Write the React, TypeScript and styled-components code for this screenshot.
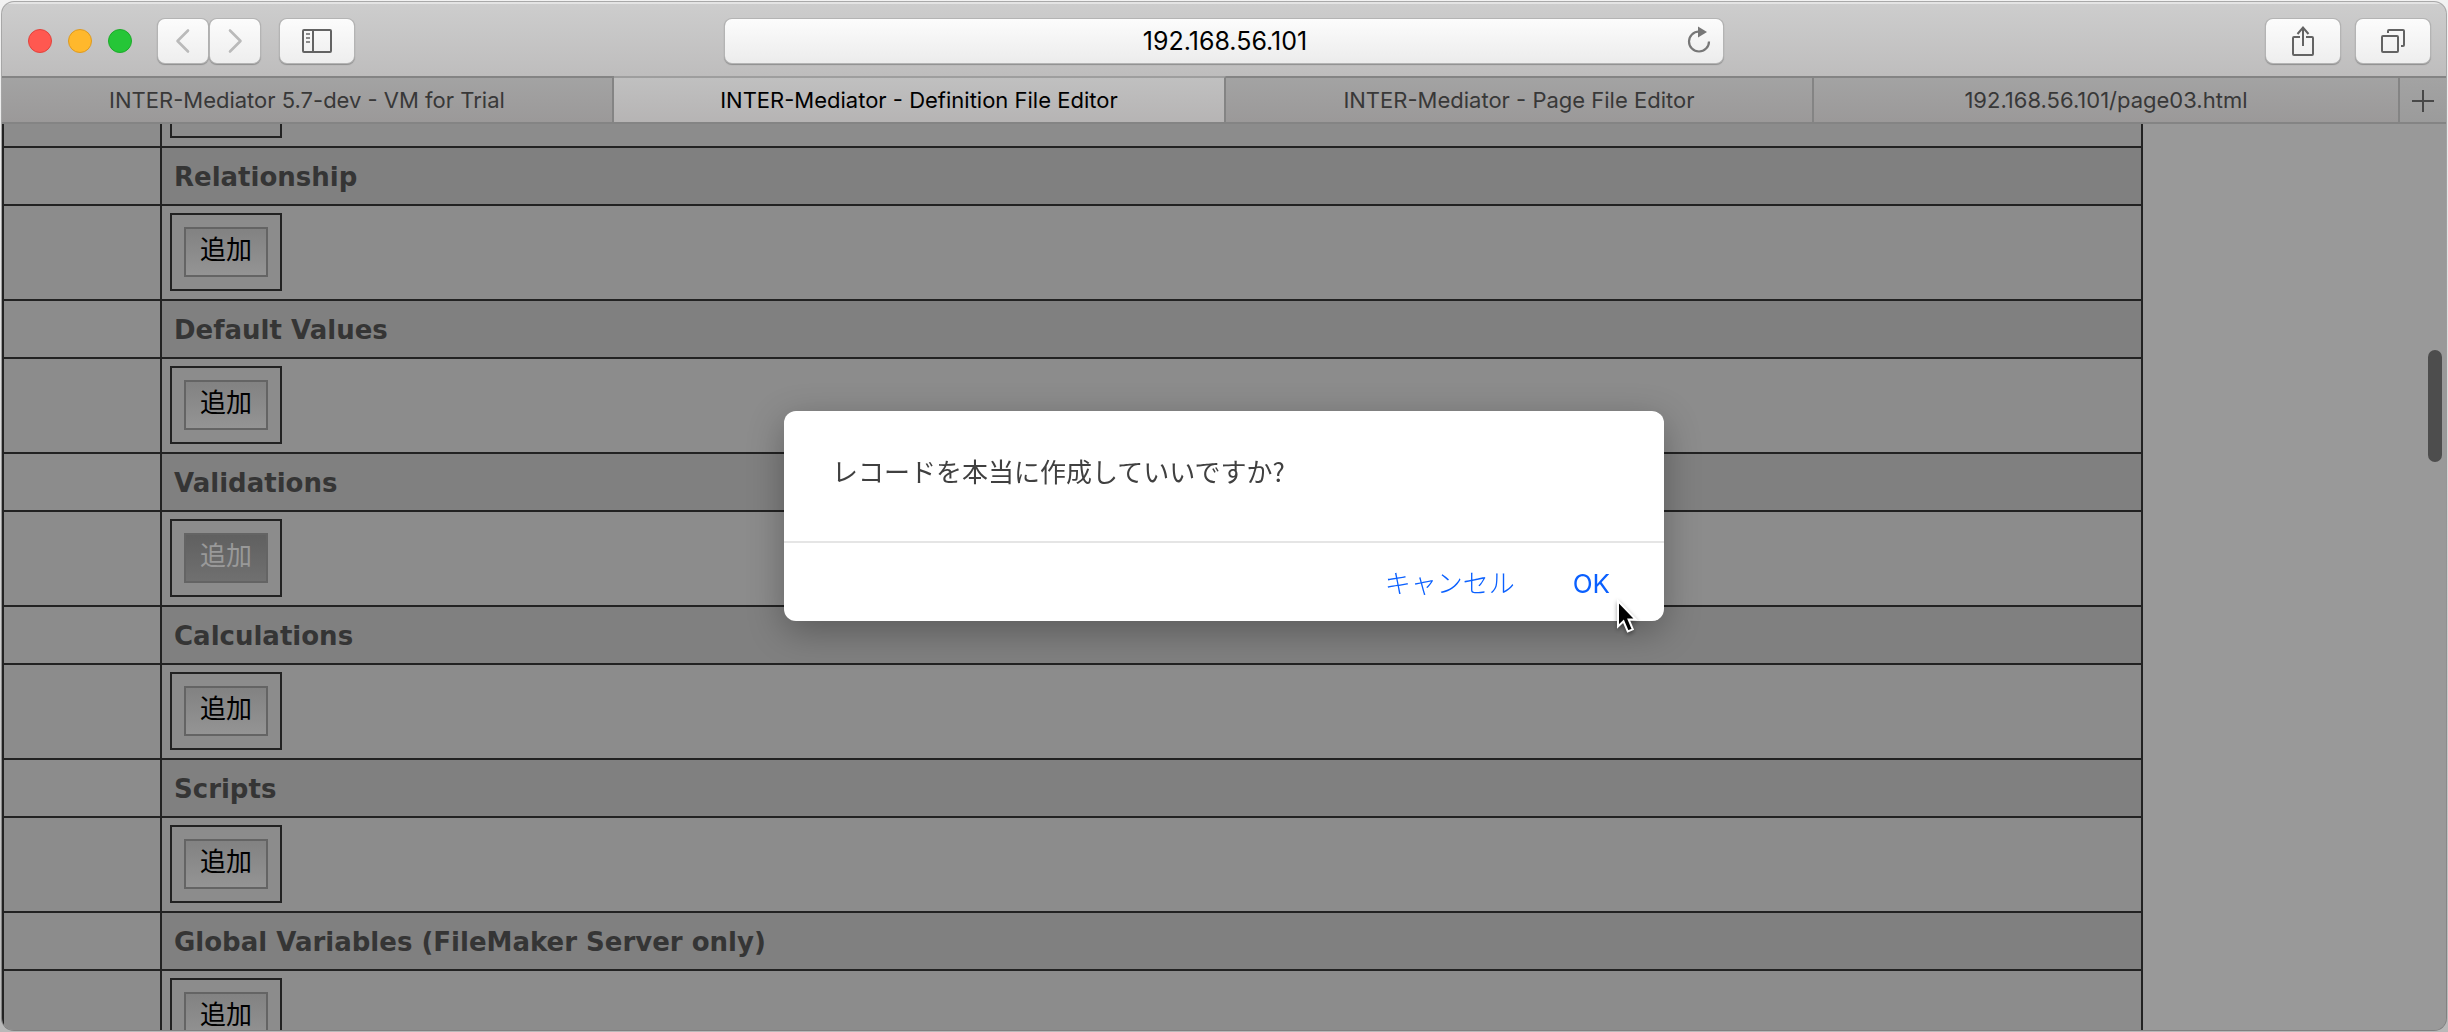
import React from "react";
import styled, { createGlobalStyle } from "styled-components";

const uiFont = `Inter, "Noto Sans CJK JP", sans-serif`;
const pageFont = `Verdana, "DejaVu Sans", "Noto Sans CJK JP", sans-serif`;

const GlobalStyle = createGlobalStyle`
  *, *::before, *::after { box-sizing: border-box; }
  body {
    margin: 0;
    background: linear-gradient(#f2f2f2, #b8b8b8);
    font-family: ${uiFont};
  }
  button, input { font: inherit; }
`;

const Desktop = styled.div`
  height: 100vh;
  padding: 2px;
  overflow: hidden;
`;

const BrowserWindow = styled.div`
  display: flex;
  flex-direction: column;
  height: 100%;
  overflow: hidden;
  border-radius: 12px;
  background: #999999;
  box-shadow: 0 0 0 1px rgba(0, 0, 0, 0.3);
`;

const Toolbar = styled.header`
  display: grid;
  grid-template-columns: 1fr minmax(0, 998px) 1fr;
  align-items: center;
  flex: none;
  height: 74px;
  padding: 2px 16px 0;
  border-top: 2px solid #e4e4e4;
  background: linear-gradient(#cdcdcd, #bebdbd);
`;

const ToolGroup = styled.div<{ $end?: boolean }>`
  display: flex;
  align-items: center;
  justify-content: ${(p) => (p.$end ? "flex-end" : "flex-start")};
  gap: ${(p) => (p.$end ? "16px" : "20px")};
  padding-left: 10px;
`;

const TrafficLights = styled.div`
  display: flex;
  gap: 16px;
  margin-right: 6px;
`;

const TrafficLight = styled.button<{ $fill: string; $edge: string }>`
  width: 24px;
  height: 24px;
  padding: 0;
  border: 1px solid ${(p) => p.$edge};
  border-radius: 50%;
  background: ${(p) => p.$fill};
`;

const NavPair = styled.div`
  display: flex;
  gap: 2px;
`;

const ToolButton = styled.button<{ $narrow?: boolean }>`
  display: flex;
  align-items: center;
  justify-content: center;
  width: ${(p) => (p.$narrow ? "50px" : "74px")};
  height: 44px;
  padding: 0;
  border: 0;
  border-radius: 7px;
  background: linear-gradient(#fcfcfc, #eeeeee);
  box-shadow: 0 0 0 1px #b4b4b4, 0 1px 1px 1px #8e8e8e;
  color: ${(p) => (p.$narrow ? "#bababa" : "#636363")};
`;

const AddressBar = styled.div`
  display: flex;
  align-items: center;
  height: 44px;
  padding: 0 12px 0 38px;
  border-radius: 7px;
  background: linear-gradient(#fcfcfc, #ececec);
  box-shadow: 0 0 0 1px #b4b4b4, 0 1px 1px 1px #8e8e8e;
`;

const AddressInput = styled.input`
  flex: 1;
  min-width: 0;
  height: 40px;
  padding: 0;
  border: 0;
  outline: 0;
  background: transparent;
  color: #000;
  font-size: 25px;
  text-align: center;
`;

const ReloadButton = styled.button`
  display: flex;
  width: 24px;
  height: 30px;
  padding: 0;
  border: 0;
  background: transparent;
  color: #777;
`;

const TabBar = styled.nav`
  display: flex;
  flex: none;
  height: 48px;
  border-bottom: 2px solid #848484;
`;

const Tab = styled.button<{ $active?: boolean; $grow: number }>`
  flex: ${(p) => p.$grow} 1 0;
  min-width: 0;
  padding: 0;
  border: 0;
  border-top: 2px solid ${(p) => (p.$active ? "#9e9e9e" : "#848484")};
  border-right: 2px solid #848484;
  background: ${(p) =>
    p.$active
      ? "linear-gradient(#c0c0c0, #b6b4b4)"
      : "linear-gradient(#a3a3a3, #9b9999)"};
  color: ${(p) => (p.$active ? "#000" : "#383838")};
  font-size: 22px;
  line-height: 28px;
  white-space: nowrap;
`;

const NewTabButton = styled.button`
  display: flex;
  flex: none;
  align-items: center;
  justify-content: center;
  width: 46px;
  padding: 2px 0 0;
  border: 0;
  border-top: 2px solid #848484;
  background: linear-gradient(#a3a3a3, #9b9b9b);
  color: #484848;
`;

const Viewport = styled.main`
  flex: 1;
  min-height: 0;
  overflow: hidden;
  padding-right: 303px;
  background: #999999;
`;

const ScrollThumb = styled.div`
  position: absolute;
  top: 350px;
  right: 6px;
  width: 14px;
  height: 112px;
  border-radius: 7px;
  background: #4d4d4d;
`;

const DefinitionTable = styled.table`
  width: 100%;
  margin-top: -73px;
  border-collapse: collapse;
  table-layout: fixed;
  background: #8c8c8c;
  font-family: ${pageFont};
`;

const GutterCell = styled.td`
  width: 158px;
  padding: 0;
  border: 2px solid #222;
`;

const SectionHeading = styled.th`
  height: 58px;
  padding: 2px 12px 0;
  border: 2px solid #222;
  background: #808080;
  color: #353535;
  font-size: 26px;
  line-height: 32px;
  text-align: left;
`;

const ActionCell = styled.td`
  height: 95px;
  padding: 7px 8px 8px;
  border: 2px solid #222;
`;

const ButtonFrame = styled.div`
  width: 112px;
  height: 78px;
  padding: 12px;
  border: 2px solid #222;
`;

const AddButton = styled.button<{ $pressed?: boolean }>`
  display: block;
  width: 84px;
  height: 50px;
  padding: 0 0 8px;
  border: 2px solid #646464;
  background: ${(p) =>
    p.$pressed
      ? "linear-gradient(#606060, #707070)"
      : "linear-gradient(#828282, #949494)"};
  color: ${(p) => (p.$pressed ? "#999" : "#000")};
  font-family: "Noto Sans CJK JP", sans-serif;
  font-size: 26px;
  line-height: 38px;
`;

const DialogLayer = styled.div`
  position: fixed;
  inset: 0;
  display: flex;
  align-items: center;
  justify-content: center;
`;

const Dialog = styled.section`
  position: relative;
  width: 880px;
  border-radius: 12px;
  background: #fff;
  box-shadow: 0 10px 36px rgba(0, 0, 0, 0.3);
`;

const DialogMessage = styled.p`
  margin: 0;
  padding: 40px 48px 50px;
  color: #404040;
  font-family: "Noto Sans CJK JP", sans-serif;
  font-size: 26px;
  line-height: 40px;
`;

const DialogActions = styled.footer`
  display: flex;
  align-items: center;
  justify-content: flex-end;
  gap: 58px;
  height: 80px;
  padding: 4px 54px 0 0;
  border-top: 2px solid #e5e5e5;
`;

const DialogButton = styled.button<{ $light?: boolean }>`
  padding: 0;
  border: 0;
  background: transparent;
  color: #0a60ff;
  font-size: 26px;
  font-weight: ${(p) => (p.$light ? 300 : 400)};
  line-height: 40px;
`;

const Pointer = styled.svg`
  position: absolute;
  right: 26px;
  bottom: -14px;
  filter: drop-shadow(0 2px 2px rgba(0, 0, 0, 0.4));
`;

const tabs = [
  { title: "INTER-Mediator 5.7-dev - VM for Trial", grow: 612 },
  { title: "INTER-Mediator - Definition File Editor", grow: 612, active: true },
  { title: "INTER-Mediator - Page File Editor", grow: 588 },
  { title: "192.168.56.101/page03.html", grow: 586 },
];

const sections = [
  { title: "Relationship" },
  { title: "Default Values" },
  { title: "Validations", pressed: true },
  { title: "Calculations" },
  { title: "Scripts" },
  { title: "Global Variables (FileMaker Server only)" },
];

function ActionRow({ pressed, empty }: { pressed?: boolean; empty?: boolean }) {
  return (
    <tr>
      <GutterCell />
      <ActionCell>
        <ButtonFrame>
          {!empty && (
            <AddButton type="button" $pressed={pressed}>
              追加
            </AddButton>
          )}
        </ButtonFrame>
      </ActionCell>
    </tr>
  );
}

function Chevron({ forward }: { forward?: boolean }) {
  return (
    <svg width="16" height="26" viewBox="0 0 16 26" fill="none" stroke="currentColor" strokeWidth="2.6" strokeLinecap="round" strokeLinejoin="round">
      <path d={forward ? "M3 2.5 13.5 13 3 23.5" : "M13 2.5 2.5 13 13 23.5"} />
    </svg>
  );
}

export default function App() {
  return (
    <>
      <GlobalStyle />
      <Desktop>
        <BrowserWindow>
          <Toolbar>
            <ToolGroup>
              <TrafficLights>
                <TrafficLight aria-label="Close" $fill="#ff5850" $edge="#e2433d" />
                <TrafficLight aria-label="Minimize" $fill="#ffb82c" $edge="#dd9a21" />
                <TrafficLight aria-label="Zoom" $fill="#25c637" $edge="#1dab2a" />
              </TrafficLights>
              <NavPair>
                <ToolButton $narrow aria-label="Back">
                  <Chevron />
                </ToolButton>
                <ToolButton $narrow aria-label="Forward">
                  <Chevron forward />
                </ToolButton>
              </NavPair>
              <ToolButton aria-label="Sidebar">
                <svg width="30" height="24" viewBox="0 0 30 24" fill="none" stroke="currentColor" strokeWidth="2">
                  <rect x="1" y="1" width="28" height="22" rx="1" />
                  <path d="M11 1v22" />
                  <path d="M4 5h4M4 9h4M4 13h4" stroke="#8c8c8c" />
                </svg>
              </ToolButton>
            </ToolGroup>
            <AddressBar>
              <AddressInput aria-label="Address" defaultValue="192.168.56.101" />
              <ReloadButton aria-label="Reload">
                <svg width="24" height="28" viewBox="0 0 24 28" fill="none" stroke="currentColor" strokeWidth="2.2">
                  <path d="M22 15.5A10 10 0 1 1 12 5.5" />
                  <path d="M11 0.5 20 6 11 11.5Z" fill="currentColor" stroke="none" />
                </svg>
              </ReloadButton>
            </AddressBar>
            <ToolGroup $end>
              <ToolButton aria-label="Share">
                <svg width="24" height="32" viewBox="0 0 24 32" fill="none" stroke="currentColor" strokeWidth="2">
                  <path d="M9 12H3a1 1 0 0 0-1 1v16a1 1 0 0 0 1 1h18a1 1 0 0 0 1-1V13a1 1 0 0 0-1-1h-6" />
                  <path d="M12 21V2M6.500 9 12 2.500 17.500 9" />
                </svg>
              </ToolButton>
              <ToolButton aria-label="Show all tabs">
                <svg width="24" height="24" viewBox="0 0 24 24" fill="none" stroke="currentColor" strokeWidth="2">
                  <rect x="1" y="7" width="16" height="16" rx="1" />
                  <path d="M7 4V2a1 1 0 0 1 1-1h14a1 1 0 0 1 1 1v14a1 1 0 0 1-1 1h-2" />
                </svg>
              </ToolButton>
            </ToolGroup>
          </Toolbar>
          <TabBar>
            {tabs.map((tab) => (
              <Tab key={tab.title} type="button" $active={tab.active} $grow={tab.grow}>
                {tab.title}
              </Tab>
            ))}
            <NewTabButton aria-label="New tab">
              <svg width="22" height="22" viewBox="0 0 22 22" fill="none" stroke="currentColor" strokeWidth="2">
                <path d="M11 0v22M0 11h22" />
              </svg>
            </NewTabButton>
          </TabBar>
          <Viewport>
            <DefinitionTable>
              <tbody>
                <ActionRow empty />
                {sections.map((section) => (
                  <React.Fragment key={section.title}>
                    <tr>
                      <GutterCell />
                      <SectionHeading scope="row">{section.title}</SectionHeading>
                    </tr>
                    <ActionRow pressed={section.pressed} />
                  </React.Fragment>
                ))}
              </tbody>
            </DefinitionTable>
            <ScrollThumb />
          </Viewport>
        </BrowserWindow>
      </Desktop>
      <DialogLayer>
        <Dialog role="alertdialog" aria-modal="true" aria-labelledby="dialog-message">
          <DialogMessage id="dialog-message">レコードを本当に作成していいですか?</DialogMessage>
          <DialogActions>
            <DialogButton type="button" $light>
              キャンセル
            </DialogButton>
            <DialogButton type="button">OK</DialogButton>
          </DialogActions>
          <Pointer width="22" height="36" viewBox="0 0 22 36" aria-hidden="true">
            <path
              d="M2 2v25.500l5.500-5.200 4.300 10.200 5-2.200-4.200-9.800h7.200Z"
              fill="#000"
              stroke="#fff"
              strokeWidth="2"
            />
          </Pointer>
        </Dialog>
      </DialogLayer>
    </>
  );
}
